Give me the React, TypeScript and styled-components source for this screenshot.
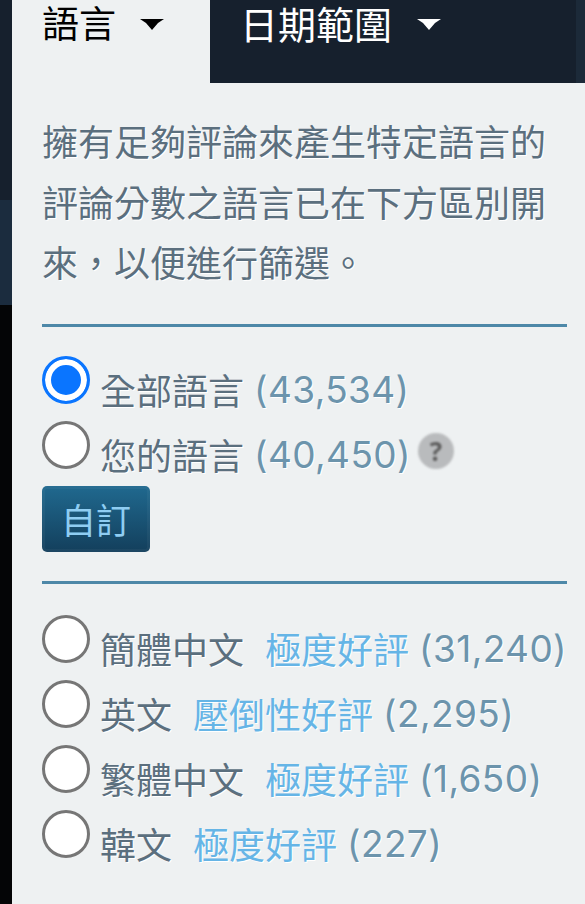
import React from "react";
import styled, { createGlobalStyle } from "styled-components";

const FONT = `"Open Sans", "Noto Sans CJK TC", sans-serif`;

const GlobalStyle = createGlobalStyle`
  * {
    margin: 0;
    padding: 0;
    box-sizing: border-box;
  }
  html, body {
    width: 585px;
    height: 904px;
    overflow: hidden;
    background: #000;
    font-family: ${FONT};
  }
`;

const Page = styled.div`
  display: flex;
  width: 585px;
  height: 904px;
`;

const Edge = styled.div`
  flex: none;
  width: 12px;
  display: flex;
  flex-direction: column;
`;

const EdgePart = styled.div<{ $h: number; $bg: string }>`
  height: ${(p) => p.$h}px;
  background: ${(p) => p.$bg};
`;

const Panel = styled.div`
  flex: 1;
  min-width: 0;
  display: flex;
  flex-direction: column;
  background: #eef1f2;
`;

const Tabs = styled.div`
  display: flex;
  height: 83px;
`;

const Tab = styled.div<{ $active?: boolean }>`
  flex: none;
  display: flex;
  gap: ${(p) => (p.$active ? 24 : 25)}px;
  height: 83px;
  padding: 5px 0 0 30px;
  width: ${(p) => (p.$active ? 198 : 366)}px;
  background: ${(p) => (p.$active ? "transparent" : "#16202d")};
  color: ${(p) => (p.$active ? "#000" : "#fff")};
  font-family: "Liberation Sans", "Noto Sans CJK TC", sans-serif;
  font-size: ${(p) => (p.$active ? 37 : 38)}px;
  line-height: 42px;
`;

const TabEnd = styled.div`
  flex: 1;
  background: #1c2a39;
`;

const Caret = styled.svg`
  width: 24px;
  height: 13px;
  margin-top: 13px;
  filter: blur(0.5px);
`;

const Body = styled.div`
  display: flex;
  flex-direction: column;
  padding: 30px 18px 0 30px;
`;

const Intro = styled.p`
  font-size: 36px;
  line-height: 60.5px;
  color: #5b6f7e;
  text-shadow: 1px 1px 0 #fff;
  white-space: nowrap;
`;

const Rule = styled.div<{ $top: number; $bottom: number }>`
  height: 3px;
  margin: ${(p) => p.$top}px 0 ${(p) => p.$bottom}px;
  background: #4d88a8;
`;

const Options = styled.div`
  display: flex;
  flex-direction: column;
  gap: 17px;
`;

const Option = styled.div`
  display: flex;
  align-items: flex-start;
  gap: 10px;
  height: 48px;
  white-space: nowrap;
`;

const Radio = styled.span<{ $checked?: boolean }>`
  flex: none;
  width: 48px;
  height: 48px;
  border-radius: 50%;
  background: ${(p) => (p.$checked ? "#0a75ff" : "#fff")};
  border: ${(p) => (p.$checked ? "3px solid #0a75ff" : "3px solid #767676")};
  box-shadow: ${(p) => (p.$checked ? "inset 0 0 0 6px #fff" : "none")};
`;

const Label = styled.span`
  display: flex;
  align-items: center;
  height: 48px;
  margin-top: 10px;
  font-size: 36px;
  color: #5b6f7e;
  text-shadow: 1px 1px 0 #fff;
`;

const Score = styled.span`
  margin-left: 21px;
  color: #66b5e6;
`;

const Count = styled.span`
  margin-left: 10px;
  color: #6c94ac;
  font-family: Inter, "Noto Sans", sans-serif;
  font-size: 37px;
  letter-spacing: 0.4px;
`;

const Help = styled.span`
  flex: none;
  display: flex;
  align-items: center;
  justify-content: center;
  width: 36px;
  height: 36px;
  margin: 12px 0 0 -3px;
  border-radius: 50%;
  background: #b9bbbd;
  color: #5e5e5e;
  font-size: 26px;
  font-weight: 700;
  filter: blur(0.8px);
`;

const Customize = styled.button`
  align-self: flex-start;
  width: 108px;
  height: 66px;
  margin-top: 17px;
  border: 0;
  border-radius: 5px;
  background: linear-gradient(180deg, #20698f 0%, #133f5c 100%);
  box-shadow: inset 0 0 0 3px rgba(255, 255, 255, 0.04);
  color: #8fcdf2;
  font-family: ${FONT};
  font-size: 35px;
`;

const CHOSEN = [
  { name: "全部語言", count: "(43,534)", checked: true },
  { name: "您的語言", count: "(40,450)", help: true },
];

const LANGUAGES = [
  { name: "簡體中文", score: "極度好評", count: "(31,240)" },
  { name: "英文", score: "壓倒性好評", count: "(2,295)" },
  { name: "繁體中文", score: "極度好評", count: "(1,650)" },
  { name: "韓文", score: "極度好評", count: "(227)" },
];

const TabCaret = ({ color }: { color: string }) => (
  <Caret viewBox="0 0 24 13">
    <path d="M0 1 H24 L18 5 L12 12 L6 5 Z" fill={color} />
  </Caret>
);

const App = () => {
  return (
    <>
      <GlobalStyle />
      <Page>
        <Edge>
          <EdgePart $h={200} $bg="#16202d" />
          <EdgePart $h={105} $bg="#1b2c3e" />
          <EdgePart $h={599} $bg="#040506" />
        </Edge>
        <Panel>
          <Tabs>
            <Tab $active>
              語言
              <TabCaret color="#000" />
            </Tab>
            <Tab>
              日期範圍
              <TabCaret color="#fff" />
            </Tab>
            <TabEnd />
          </Tabs>
          <Body>
            <Intro>
              擁有足夠評論來產生特定語言的
              <br />
              評論分數之語言已在下方區別開
              <br />
              來，以便進行篩選。
            </Intro>
            <Rule $top={29} $bottom={29} />
            <Options>
              {CHOSEN.map((item) => (
                <Option key={item.name}>
                  <Radio $checked={item.checked} />
                  <Label>
                    {item.name}
                    <Count>{item.count}</Count>
                  </Label>
                  {item.help && <Help>?</Help>}
                </Option>
              ))}
            </Options>
            <Customize>自訂</Customize>
            <Rule $top={29} $bottom={31} />
            <Options>
              {LANGUAGES.map((item) => (
                <Option key={item.name}>
                  <Radio />
                  <Label>
                    {item.name}
                    <Score>{item.score}</Score>
                    <Count>{item.count}</Count>
                  </Label>
                </Option>
              ))}
            </Options>
          </Body>
        </Panel>
      </Page>
    </>
  );
};

export default App;
